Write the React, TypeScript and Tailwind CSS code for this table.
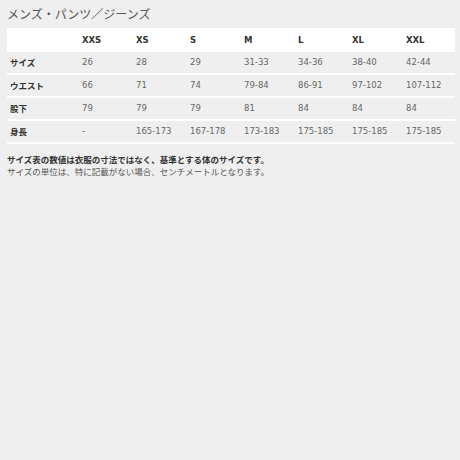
const sizes = ['XXS', 'XS', 'S', 'M', 'L', 'XL', 'XXL'];

const rows = [
  { label: 'サイズ', values: ['26', '28', '29', '31-33', '34-36', '38-40', '42-44'] },
  { label: 'ウエスト', values: ['66', '71', '74', '79-84', '86-91', '97-102', '107-112'] },
  { label: '股下', values: ['79', '79', '79', '81', '84', '84', '84'] },
  { label: '身長', values: ['-', '165-173', '167-178', '173-183', '175-185', '175-185', '175-185'] },
];

const jp = "font-['Verdana','DejaVu_Sans','Noto_Sans_CJK_JP',sans-serif]";

export default function App() {
  return (
    <div className={`min-h-[460px] w-[460px] bg-[#efefef] px-[7px] pt-[5px] ${jp}`}>
      <h1 className="text-[12px] leading-[18px] text-[#555] font-normal font-['Noto_Sans_CJK_JP',sans-serif]">
        メンズ・パンツ／ジーンズ
      </h1>

      <div className="mt-[5px] w-[448px]">
        {/* header */}
        <div className="grid grid-cols-[72px_repeat(7,54px)] h-[24px] items-center bg-white text-[8.5px] font-bold text-[#333]">
          <div />
          {sizes.map((s) => (
            <div key={s} className="pl-[3px]">{s}</div>
          ))}
        </div>

        {rows.map((row) => (
          <div
            key={row.label}
            className="grid grid-cols-[72px_repeat(7,54px)] h-[23px] items-center border-b-2 border-white text-[8.5px] text-[#666]"
          >
            <div className="pl-[3px] font-bold text-[#333] font-['Noto_Sans_CJK_JP',sans-serif]">{row.label}</div>
            {row.values.map((v, i) => (
              <div key={i} className="pl-[3px]">{v}</div>
            ))}
          </div>
        ))}
      </div>

      <div className="mt-[9px] text-[8.5px] leading-[12px] font-['Noto_Sans_CJK_JP',sans-serif]">
        <p className="font-bold text-[#333]">サイズ表の数値は衣服の寸法ではなく、基準とする体のサイズです。</p>
        <p className="text-[#555]">サイズの単位は、特に記載がない場合、センチメートルとなります。</p>
      </div>
    </div>
  );
}
